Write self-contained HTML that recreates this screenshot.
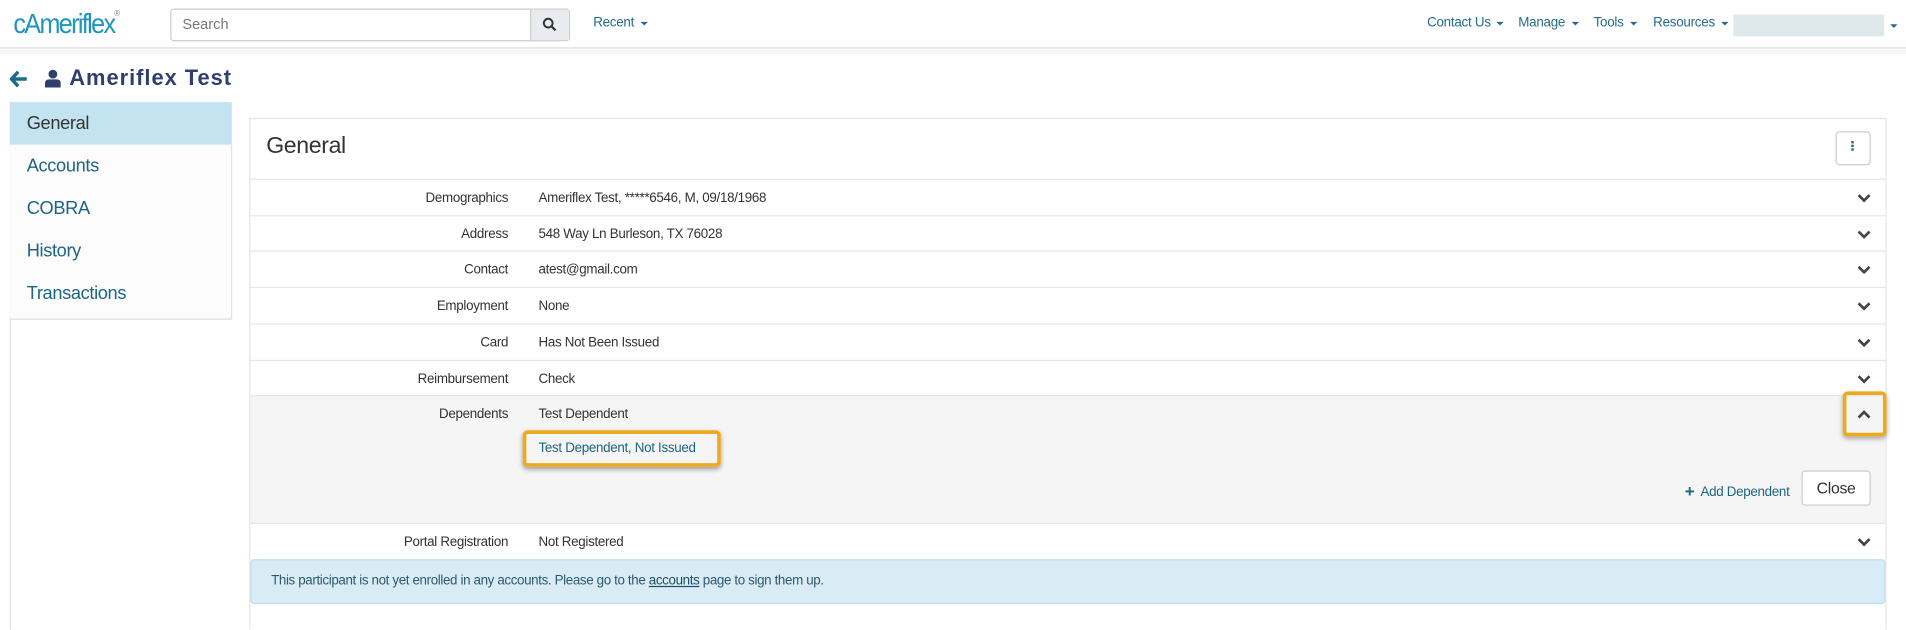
<!DOCTYPE html>
<html><head><meta charset="utf-8"><style>
*{box-sizing:border-box;margin:0;padding:0}
html,body{width:1906px;height:630px;overflow:hidden;background:#fff;font-family:"Liberation Sans",sans-serif}
#w{position:absolute;left:0;top:0;width:1568px;height:518px;transform:scale(1.21556);transform-origin:0 0}
.a{position:absolute}
.nav{color:#236c8c;font-size:11px;letter-spacing:-0.2px}
.car{display:inline-block;border-left:3px solid transparent;border-right:3px solid transparent;border-top:3px solid #236c8c;vertical-align:middle;margin-left:5px}
.side div{height:35px;line-height:35px;padding-left:14px;font-size:15px;color:#1d6584;letter-spacing:-0.3px}
.row{position:absolute;left:206px;width:1345px;border-top:1px solid #e6e6e6;font-size:11px;color:#333;letter-spacing:-0.25px}
.row .l{position:absolute;left:0;width:212px;text-align:right;top:9px}
.row .v{position:absolute;left:237px;top:9px}
.chev{position:absolute;left:1322px;top:11px}
</style></head><body><div id="w">
<div class="a" style="left:0;top:0;width:1568px;height:40px;border-bottom:1px solid #d5d8dc"></div>
<div class="a" style="left:0;top:41px;width:1568px;height:4px;background:#f4f5f8"></div>
<div class="a" style="left:11px;top:6px;font-size:23px;color:#1c95bf;letter-spacing:-1.5px;transform:scaleX(0.9);transform-origin:0 0">cAmeriflex<sup style="font-size:7px;color:#888;vertical-align:top;position:relative;top:2px;letter-spacing:0">®</sup></div>
<div class="a" style="left:140px;top:7px;width:329px;height:27px;border:1px solid #ccc;border-radius:3px"></div>
<div class="a" style="left:150px;top:13px;font-size:12px;color:#777">Search</div>
<div class="a" style="left:436px;top:8px;width:32px;height:25px;background:#e9ebee;border-left:1px solid #ccc"></div>
<svg class="a" style="left:446px;top:14px" width="12" height="12" viewBox="0 0 12 12"><circle cx="5" cy="5" r="3.6" fill="none" stroke="#333" stroke-width="1.6"/><path d="M7.7 7.7L11 11" stroke="#333" stroke-width="1.8"/></svg>
<div class="a nav" style="left:488px;top:13px">Recent<span class="car"></span></div>
<div class="a nav" style="left:1174px;top:13px">Contact Us<span class="car"></span></div>
<div class="a nav" style="left:1249px;top:13px">Manage<span class="car"></span></div>
<div class="a nav" style="left:1311px;top:13px">Tools<span class="car"></span></div>
<div class="a nav" style="left:1360px;top:13px">Resources<span class="car"></span></div>
<div class="a" style="left:1426px;top:12px;width:124px;height:18px;background:#dfe9eb"></div>
<div class="a" style="left:1550px;top:13px"><span class="car"></span></div>
<svg class="a" style="left:8px;top:58px" width="15" height="14" viewBox="0 0 15 14"><path d="M7 1L1.5 7L7 13M2 7H14" fill="none" stroke="#1f6a89" stroke-width="2.8"/></svg>
<svg class="a" style="left:37px;top:57px" width="13" height="15" viewBox="0 0 13 15"><circle cx="6.5" cy="4" r="3.6" fill="#2f3f6e"/><path d="M0 15V11.5Q0 8.3 3.5 8.3H9.5Q13 8.3 13 11.5V15Z" fill="#2f3f6e"/></svg>
<div class="a" style="left:57px;top:54px;font-size:18px;font-weight:bold;color:#2f3f6e;letter-spacing:0.8px">Ameriflex Test</div>
<div class="a" style="left:8px;top:84px;width:1px;height:434px;background:#e3e3e3"></div>
<div class="a side" style="left:8px;top:84px;width:183px;border-right:1px solid #e3e3e3;border-bottom:1px solid #ddd;padding-bottom:3px;background:#fcfcfc">
<div style="background:#c4e3f0;color:#333">General</div><div>Accounts</div><div>COBRA</div><div>History</div><div>Transactions</div></div>
<div class="a" style="left:205px;top:97px;width:1347px;height:421px;border:1px solid #e6e6e6;border-bottom:none"></div>
<div class="a" style="left:219px;top:110px;font-size:19px;color:#333;letter-spacing:-0.3px">General</div>
<div class="a" style="left:1510px;top:108px;width:29px;height:28px;border:1px solid #ccc;border-radius:3px"></div>
<div class="a" style="left:1523px;top:116px;width:2px;height:2px;background:#236c6c;box-shadow:0 3px #236c6c,0 6px #236c6c"></div>
<div class="row" style="top:147px;height:30px"><div class="l">Demographics</div><div class="v">Ameriflex Test, *****6546, M, 09/18/1968</div><svg class="chev" width="11" height="8" viewBox="0 0 11 8"><path d="M1 1.5L5.5 6L10 1.5" fill="none" stroke="#444" stroke-width="2.2"/></svg></div>
<div class="row" style="top:177px;height:29px"><div class="l">Address</div><div class="v">548 Way Ln Burleson, TX 76028</div><svg class="chev" width="11" height="8" viewBox="0 0 11 8"><path d="M1 1.5L5.5 6L10 1.5" fill="none" stroke="#444" stroke-width="2.2"/></svg></div>
<div class="row" style="top:206px;height:30px"><div class="l">Contact</div><div class="v">atest@gmail.com</div><svg class="chev" width="11" height="8" viewBox="0 0 11 8"><path d="M1 1.5L5.5 6L10 1.5" fill="none" stroke="#444" stroke-width="2.2"/></svg></div>
<div class="row" style="top:236px;height:30px"><div class="l">Employment</div><div class="v">None</div><svg class="chev" width="11" height="8" viewBox="0 0 11 8"><path d="M1 1.5L5.5 6L10 1.5" fill="none" stroke="#444" stroke-width="2.2"/></svg></div>
<div class="row" style="top:266px;height:30px"><div class="l">Card</div><div class="v">Has Not Been Issued</div><svg class="chev" width="11" height="8" viewBox="0 0 11 8"><path d="M1 1.5L5.5 6L10 1.5" fill="none" stroke="#444" stroke-width="2.2"/></svg></div>
<div class="row" style="top:296px;height:29px"><div class="l">Reimbursement</div><div class="v">Check</div><svg class="chev" width="11" height="8" viewBox="0 0 11 8"><path d="M1 1.5L5.5 6L10 1.5" fill="none" stroke="#444" stroke-width="2.2"/></svg></div>
<div class="row" style="top:325px;height:105px;background:#f5f5f5"><div class="l">Dependents</div><div class="v">Test Dependent</div>
<div class="a" style="left:224px;top:28px;width:163px;height:30px;border:3px solid #eeaa1e;border-radius:4px;box-shadow:0 2px 4px rgba(0,0,0,.35)"></div>
<div class="a" style="left:237px;top:37px;color:#1d6584">Test Dependent, Not Issued</div>
<div class="a" style="left:1310px;top:-4px;width:36px;height:37px;border:3px solid #eeaa1e;border-radius:4px;box-shadow:0 2px 4px rgba(0,0,0,.3)"></div>
<svg class="a" style="left:1322px;top:11px" width="11" height="8" viewBox="0 0 11 8"><path d="M1 6.5L5.5 2L10 6.5" fill="none" stroke="#444" stroke-width="2.2"/></svg>
<div class="a" style="left:1180px;top:69px;color:#1d6584"><b style="font-size:14px;position:relative;top:1px">+</b>&nbsp; Add Dependent</div>
<div class="a" style="left:1276px;top:61px;width:57px;height:29px;border:1px solid #ccc;border-radius:3px;background:#fff;font-size:13px;text-align:center;line-height:27px">Close</div>
</div>
<div class="row" style="top:430px;height:30px"><div class="l">Portal Registration</div><div class="v">Not Registered</div><svg class="chev" width="11" height="8" viewBox="0 0 11 8"><path d="M1 1.5L5.5 6L10 1.5" fill="none" stroke="#444" stroke-width="2.2"/></svg></div>
<div class="a" style="left:206px;top:460px;width:1345px;height:37px;background:#d9ecf6;border:1px solid #bfe0ee;border-radius:3px"></div>
<div class="a" style="left:223px;top:472px;font-size:11px;color:#2b5a70;letter-spacing:-0.3px">This participant is not yet enrolled in any accounts. Please go to the <u style="color:#1d4d63">accounts</u> page to sign them up.</div>
</div></body></html>
